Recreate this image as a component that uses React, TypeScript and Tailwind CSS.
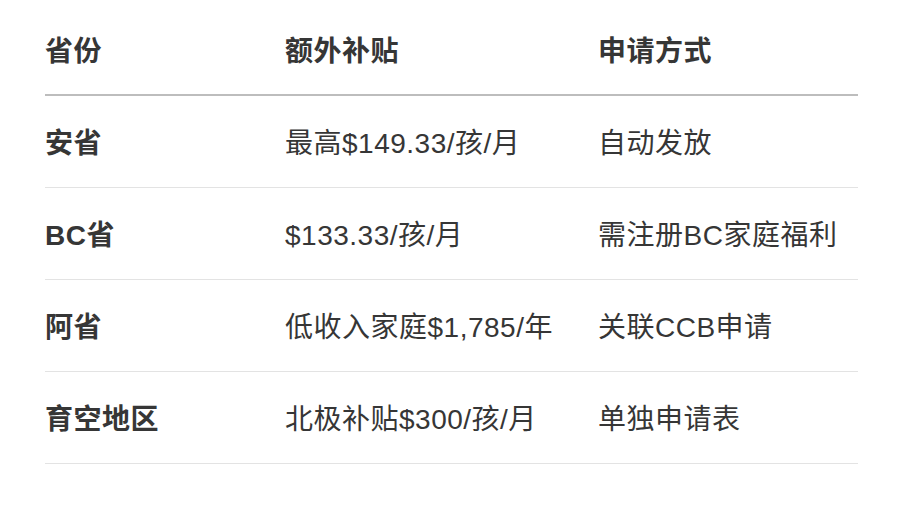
import React from "react";

const rows = [
  ["安省", "最高$149.33/孩/月", "自动发放"],
  ["BC省", "$133.33/孩/月", "需注册BC家庭福利"],
  ["阿省", "低收入家庭$1,785/年", "关联CCB申请"],
  ["育空地区", "北极补贴$300/孩/月", "单独申请表"],
];

export default function App() {
  return (
    <div
      className="w-[920px] h-[508px] bg-white text-[#363636] text-[28px] tracking-[0.5px]"
      style={{ fontFamily: '"Liberation Sans", "Noto Sans CJK SC", sans-serif' }}
    >
      <div className="ml-[45px] mt-[4px] w-[813px]">
        <div className="grid grid-cols-[240px_313px_260px] h-[92px] pt-[5px] items-center border-b-2 border-[#bdbdbd] font-bold">
          <div>省份</div>
          <div>额外补贴</div>
          <div>申请方式</div>
        </div>
        {rows.map((r) => (
          <div
            key={r[0]}
            className="grid grid-cols-[240px_313px_260px] h-[92px] pt-[4px] items-center border-b border-[#e3e3e3]"
          >
            <div className="font-bold">{r[0]}</div>
            <div className="whitespace-nowrap">{r[1]}</div>
            <div className="whitespace-nowrap">{r[2]}</div>
          </div>
        ))}
      </div>
    </div>
  );
}
